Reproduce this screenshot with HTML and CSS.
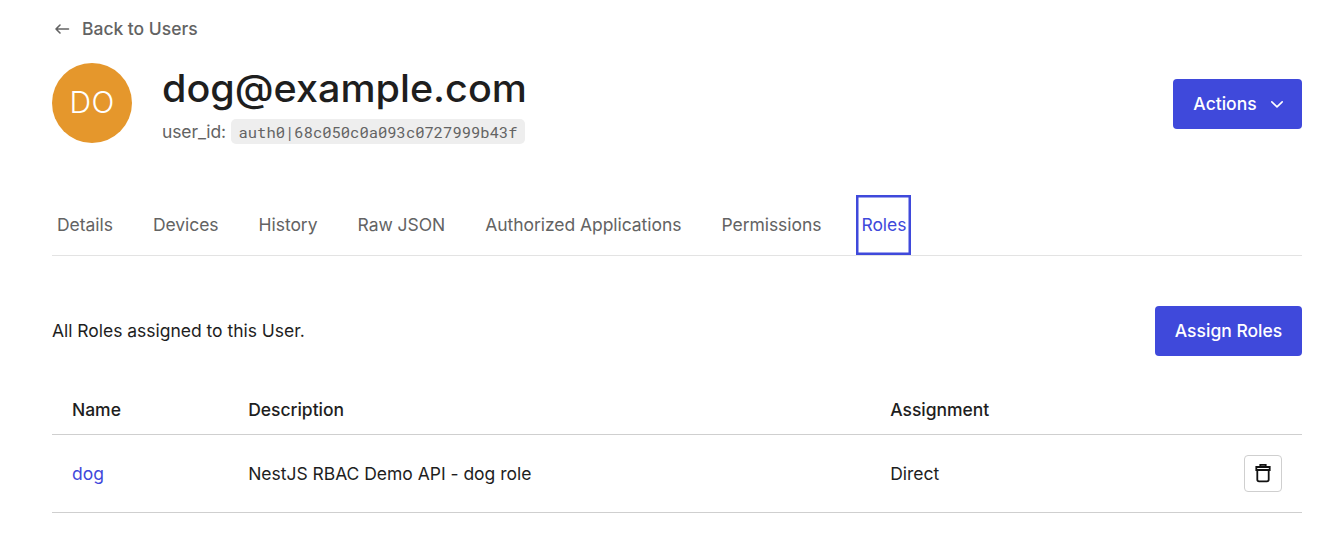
FILE: index.html
```html
<!DOCTYPE html>
<html lang="en">
<head>
<meta charset="utf-8">
<title>User details</title>
<link rel="stylesheet" href="styles.css">
</head>
<body>
<main class="page">
  <a class="back"><svg class="back-icon" width="16" height="16" viewBox="0 0 16 16"><path d="M14.500 8H2M6 4 2 8l4 4"/></svg><span>Back to Users</span></a>
  <header class="profile">
    <div class="avatar">DO</div>
    <div class="identity">
      <h1 class="title">dog@example.com</h1>
      <div class="user-id"><span>user_id:</span><code class="code">auth0|68c050c0a093c0727999b43f</code></div>
    </div>
    <button class="button actions"><span>Actions</span><svg class="chevron" width="14" height="14" viewBox="0 0 14 14"><path d="M1.800 4.800 7 9.800l5.200-5"/></svg></button>
  </header>
  <nav class="tabs">
    <a class="tab">Details</a><a class="tab">Devices</a><a class="tab">History</a><a class="tab">Raw JSON</a><a class="tab">Authorized Applications</a><a class="tab">Permissions</a><a class="tab active">Roles</a>
  </nav>
  <section class="intro"><p class="intro-text">All Roles assigned to this User.</p><button class="button assign">Assign Roles</button></section>
  <div class="table">
    <div class="row head"><span>Name</span><span>Description</span><span>Assignment</span></div>
    <div class="row item"><a class="role">dog</a><span>NestJS RBAC Demo API - dog role</span><span>Direct</span>
      <button class="delete"><svg class="trash" width="20" height="20" viewBox="0 0 20 20"><path d="M3.300 4h13.400v3H3.300zM7.300 3.800V1.800h5.400v2M4.300 7v9.500q0 1.800 1.800 1.800h7.800q1.800 0 1.800-1.800V7"/></svg></button>
    </div>
  </div>
</main>
</body>
</html>
```
FILE: styles.css
```css
* { box-sizing: border-box; }
body { margin: 0; background: #fff; color: #1e1e1e; font: 17.5px/24px Inter, sans-serif; letter-spacing: -0.025px; }
.page { width: 1250px; margin-left: 52px; padding-top: 17px; }
.back { display: flex; align-items: center; gap: 12px; padding-left: 2px; height: 24px; color: #636363; font-weight: 500; }
.back-icon, .chevron, .trash { fill: none; stroke: currentColor; stroke-width: 1.6; stroke-linecap: round; stroke-linejoin: round; }
.profile { display: flex; height: 82px; margin-top: 22px; }
.avatar { width: 80px; height: 80px; padding-bottom: 2px; border-radius: 50%; background: #e5972c; color: #fff; display: flex; align-items: center; justify-content: center; font-size: 30px; font-weight: 300; letter-spacing: 0.4px; }
.identity { margin-left: 30px; flex: 1; }
.title { margin: 0; padding-bottom: 1px; font-size: 38px; line-height: 50px; font-weight: 500; letter-spacing: 0; white-space: nowrap; transform: scaleX(1.04); transform-origin: left; }
.user-id { display: flex; align-items: center; gap: 5px; margin-top: 5px; height: 25px; color: #636363; letter-spacing: -0.12px; }
.code { background: #eee; border-radius: 5px; padding: 0 7.5px; height: 25px; line-height: 26px; font-family: "Roboto Mono", "Liberation Mono", monospace; font-size: 15.5px; letter-spacing: 0; color: #636363; }
.button { border: 0; border-radius: 4px; height: 50px; background: #3f49db; color: #fff; font: 500 17.5px/24px Inter, sans-serif; }
.actions { width: 129px; margin-top: 16px; display: flex; align-items: center; justify-content: center; gap: 13px; padding: 0 0 0 2px; }
.tabs { display: flex; gap: 30.05px; height: 61px; margin-top: 50px; border-bottom: 1px solid #e3e3e3; color: #636363; letter-spacing: -0.05px; }
.tab { height: 60px; padding: 0 5px; line-height: 60px; white-space: nowrap; }
.active { margin-left: -0.4px; padding: 0 5px 0 5.4px; color: #3f49db; box-shadow: inset 0 0 0 2.5px #3f49db; }
.intro { display: flex; justify-content: space-between; align-items: center; margin-top: 50px; height: 50px; }
.intro-text { margin: 0; }
.assign { width: 147px; padding: 0; }
.table { margin-top: 29px; }
.row { display: grid; grid-template-columns: 176.2px 642px 1fr auto; padding: 0 20px; align-items: center; border-bottom: 1px solid #cfcfcf; }
.head { height: 50px; font-weight: 500; }
.item { height: 78px; }
.role { color: #3f49db; }
.delete { width: 38px; height: 37px; margin-bottom: 1px; padding: 0; display: flex; align-items: center; justify-content: center; background: #fff; color: #111; border: 1px solid #cfcfcf; border-radius: 4px; }
.trash { stroke-width: 1.8; stroke-linejoin: miter; }
```
